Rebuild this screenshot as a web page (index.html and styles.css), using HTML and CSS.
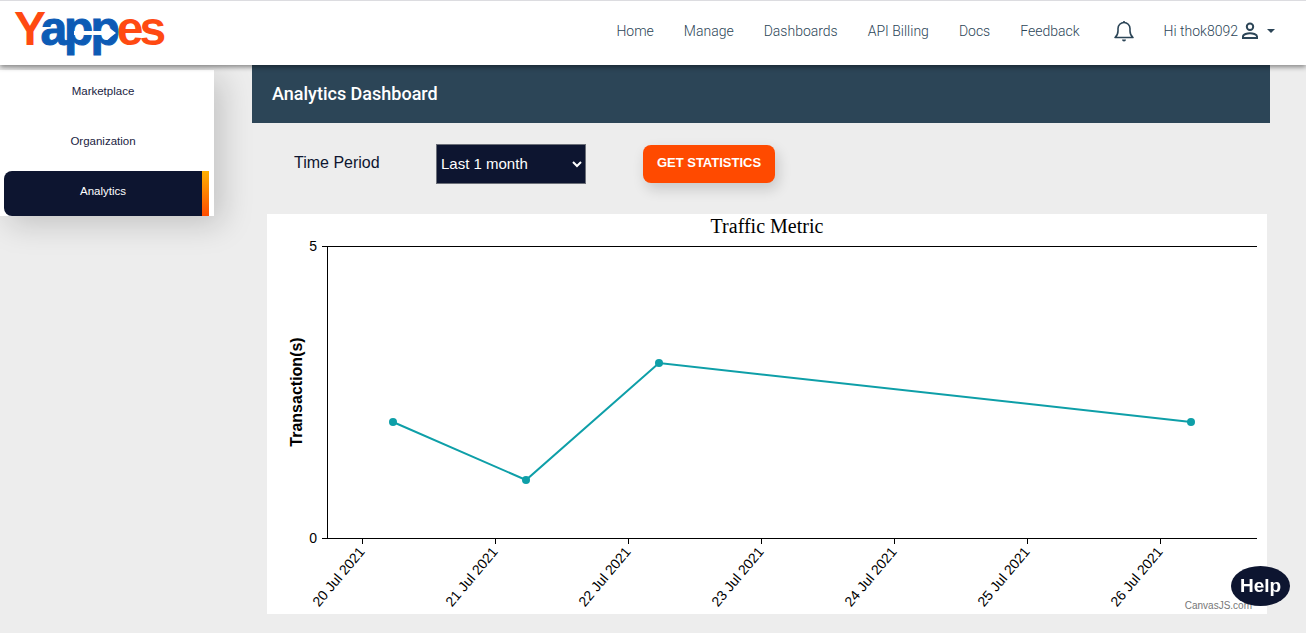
FILE: index.html
```html
<!DOCTYPE html>
<html lang="en">
<head>
    <meta charset="UTF-8">
    <title>Analytics Dashboard</title>
    <link rel="stylesheet" href="styles.css">
</head>
<body>
    <header class="topbar">
        <a class="logo" href="#">
            <span class="logo-red">Y</span><span class="logo-blue">app</span><span class="logo-red logo-end">es</span>
            <svg class="logo-arrow" width="50" height="20" viewBox="0 0 50 20">
                <path d="M0 8h33V3l9 7-9 7v-5H0z" fill="#fff"/>
            </svg>
        </a>
        <nav class="nav">
            <a href="#">Home</a>
            <a href="#">Manage</a>
            <a href="#">Dashboards</a>
            <a href="#">API Billing</a>
            <a href="#">Docs</a>
            <a href="#">Feedback</a>
        </nav>
        <svg class="bell" width="24" height="24" viewBox="0 0 24 24" fill="none" stroke="#2c4557" stroke-width="1.6">
            <path d="M3 18.5c2-1.6 3-3 3-6.5V9.500a6 6 0 0 1 12 0V12c0 3.500 1 4.900 3 6.500z" stroke-linejoin="round"/>
            <path d="M10 20.500a2 2 0 0 0 4 0z" fill="#2c4557" stroke="none"/>
            <path d="M12 2v1.500"/>
        </svg>
        <div class="user">
            <span>Hi thok8092</span>
            <svg class="user-icon" width="20" height="20" viewBox="0 0 20 20" fill="none" stroke="#2c4557" stroke-width="2">
                <circle cx="10" cy="5.800" r="3.200"/>
                <path d="M3 17v-1.500c0-2.300 4.500-3.300 7-3.300s7 1 7 3.300V17z"/>
            </svg>
            <i class="caret"></i>
        </div>
    </header>

    <div class="page">
        <aside class="sidebar">
            <a class="side-item" href="#">Marketplace</a>
            <a class="side-item" href="#">Organization</a>
            <a class="side-item active" href="#">Analytics</a>
        </aside>

        <main class="main">
            <h1 class="banner">Analytics Dashboard</h1>
            <div class="filters">
                <label class="period-label" for="period">Time Period</label>
                <select class="period" id="period">
                    <option>Last 1 month</option>
                    <option>Last 1 week</option>
                </select>
                <button class="stats-btn">GET STATISTICS</button>
            </div>

            <div class="chart-card">
                <!-- viewBox uses page coordinates -->
                <svg class="chart" width="1000" height="400" viewBox="267 214 1000 400">
                    <text class="chart-title" x="767" y="233">Traffic Metric</text>
                    <text class="axis-title" transform="translate(302 392) rotate(-90)">Transaction(s)</text>

                    <path class="axis" d="M322 246.500H1257M327.500 246V539M322 538.500H1257"/>
                    <path class="axis" d="M362.500 538v6M495.500 538v6M628.500 538v6M761.500 538v6M894.500 538v6M1027.500 538v6M1160.500 538v6"/>

                    <text class="y-label" x="317" y="251">5</text>
                    <text class="y-label" x="317" y="543">0</text>

                    <text class="x-label" transform="translate(365.500 552) rotate(-50)">20 Jul 2021</text>
                    <text class="x-label" transform="translate(498.500 552) rotate(-50)">21 Jul 2021</text>
                    <text class="x-label" transform="translate(631.500 552) rotate(-50)">22 Jul 2021</text>
                    <text class="x-label" transform="translate(764.500 552) rotate(-50)">23 Jul 2021</text>
                    <text class="x-label" transform="translate(897.500 552) rotate(-50)">24 Jul 2021</text>
                    <text class="x-label" transform="translate(1030.500 552) rotate(-50)">25 Jul 2021</text>
                    <text class="x-label" transform="translate(1163.500 552) rotate(-50)">26 Jul 2021</text>

                    <polyline class="series" points="393,422 526,480 659,363 1191,422"/>
                    <circle class="dot" cx="393" cy="422" r="4"/>
                    <circle class="dot" cx="526" cy="480" r="4"/>
                    <circle class="dot" cx="659" cy="363" r="4"/>
                    <circle class="dot" cx="1191" cy="422" r="4"/>

                    <text class="credit" x="1252" y="609">CanvasJS.com</text>
                </svg>
            </div>
        </main>
    </div>

    <button class="help">Help</button>
</body>
</html>
```

FILE: styles.css
```css
* {
    box-sizing: border-box;
}

html, body {
    height: 100%;
}

body {
    margin: 0;
    background-color: #ededed;
    font-family: 'Liberation Sans', Arial, sans-serif;
    overflow: hidden;
}

a {
    text-decoration: none;
}

/* Top bar */
.topbar {
    position: relative;
    z-index: 2;
    display: flex;
    align-items: center;
    height: 65px;
    padding: 0 31px 5px 14px;
    background-color: #fff;
    border-top: 1px solid #dcdce0;
    box-shadow: 0 2px 5px rgba(0, 0, 0, 0.45);
}

.logo {
    position: relative;
    display: block;
    width: 150px;
    height: 50px;
    margin-top: -3px;
    font-size: 48px;
    font-weight: bold;
    line-height: 50px;
    letter-spacing: -3px;
    white-space: nowrap;
}

.logo-red {
    color: #ff4a12;
}

.logo-end {
    letter-spacing: -4px;
}

.logo-blue {
    color: #0d5bb5;
    -webkit-text-stroke: 1px #0d5bb5;
}

.logo-arrow {
    position: absolute;
    left: 60px;
    top: 19px;
}

.nav {
    display: flex;
    gap: 30px;
    margin-left: auto;
    font-family: Roboto, sans-serif;
    font-size: 14px;
    font-weight: 300;
}

.nav a {
    color: #2c4557;
}

.bell {
    margin-left: 32px;
}

.user {
    display: flex;
    align-items: center;
    margin-left: 28px;
    font-family: Roboto, sans-serif;
    font-size: 14px;
    font-weight: 300;
    color: #2c4557;
}

.user-icon {
    margin-left: 2px;
}

.caret {
    width: 0;
    height: 0;
    margin-left: 7px;
    border-top: 4px solid #2c4557;
    border-left: 4px solid transparent;
    border-right: 4px solid transparent;
}

/* Page */
.page {
    display: flex;
    align-items: flex-start;
}

.sidebar {
    display: flex;
    flex-direction: column;
    flex: none;
    width: 214px;
    height: 146px;
    margin-top: 5px;
    padding-top: 1px;
    background-color: #fff;
    box-shadow: 8px 8px 30px rgba(0, 0, 0, 0.18);
}

.side-item {
    display: block;
    width: 206px;
    height: 50px;
    padding-top: 14px;
    font-size: 11.500px;
    text-align: center;
    color: #1a2342;
}

.side-item.active {
    width: 205px;
    height: 45px;
    margin-left: 4px;
    border-radius: 8px 0 0 8px;
    border-right: 7px solid;
    border-image: linear-gradient(#ffb300, #ff4a00) 1;
    background-color: #0d1530;
    color: #fff;
}

.main {
    width: 1018px;
    margin-left: 38px;
}

.banner {
    height: 58px;
    margin: 0;
    padding-left: 20px;
    background-color: #2c4557;
    font-family: Roboto, sans-serif;
    font-size: 18px;
    font-weight: 500;
    line-height: 57px;
    color: #fff;
}

.filters {
    display: flex;
    align-items: center;
    height: 91px;
    padding: 0 0 9px 42px;
}

.period-label {
    width: 142px;
    margin-top: -3px;
    font-size: 16px;
    color: #0d1530;
}

.period {
    width: 150px;
    height: 40px;
    padding: 0 0 2px;
    border: 1px solid #6b6f78;
    border-radius: 0;
    background-color: #0d1530;
    font-family: 'Liberation Sans', Arial, sans-serif;
    font-size: 15px;
    color: #fff;
}

.stats-btn {
    width: 132px;
    height: 38px;
    margin-left: 57px;
    padding: 0 0 3px;
    border: none;
    border-radius: 8px;
    background-color: #ff4a00;
    box-shadow: 3px 6px 14px rgba(0, 0, 0, 0.16);
    font-family: 'Liberation Sans', Arial, sans-serif;
    font-size: 13px;
    font-weight: bold;
    color: #fff;
}

/* Chart */
.chart-card {
    width: 1000px;
    height: 400px;
    margin-left: 15px;
    background-color: #fff;
}

.chart {
    display: block;
}

.chart-title {
    font-family: 'Liberation Serif', serif;
    font-size: 20px;
    text-anchor: middle;
    fill: #000;
}

.axis-title {
    font-size: 16px;
    font-weight: bold;
    text-anchor: middle;
    fill: #000;
}

.axis {
    fill: none;
    stroke: #000;
    stroke-width: 1;
}

.y-label {
    font-size: 14px;
    text-anchor: end;
    fill: #000;
}

.x-label {
    font-size: 14px;
    text-anchor: end;
    fill: #000;
}

.series {
    fill: none;
    stroke: #0e9fa8;
    stroke-width: 2;
}

.dot {
    fill: #0e9fa8;
}

.credit {
    font-size: 10px;
    text-anchor: end;
    fill: #777;
}

.help {
    position: fixed;
    right: 16px;
    bottom: 27px;
    width: 59px;
    height: 40px;
    padding: 0;
    border: none;
    border-radius: 50%;
    background-color: #0d1530;
    font-family: 'Liberation Sans', Arial, sans-serif;
    font-size: 19px;
    font-weight: bold;
    color: #fff;
}
```
